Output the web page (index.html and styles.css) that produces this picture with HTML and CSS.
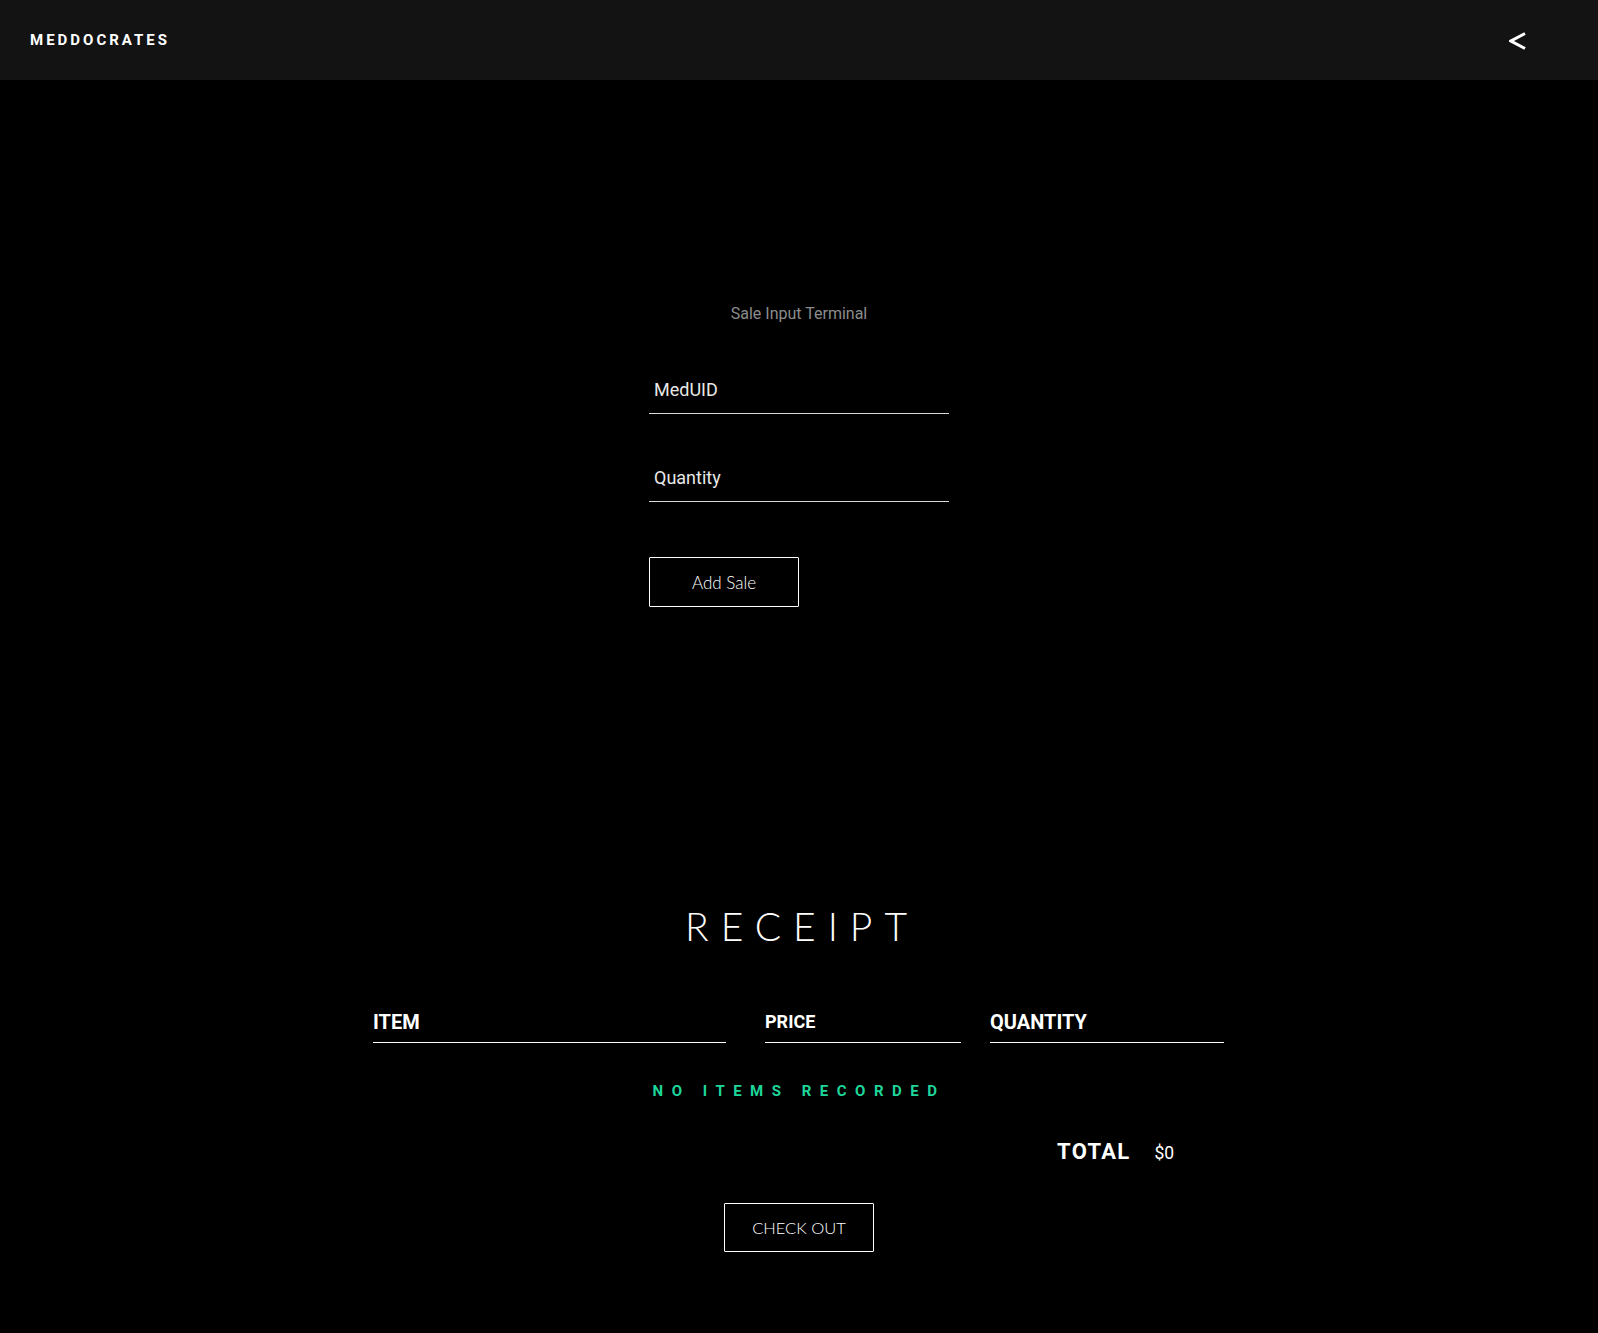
FILE: index.html
```html
<!DOCTYPE html>
<html lang="en">
<head>
<meta charset="utf-8">
<title>Meddocrates</title>
<link rel="stylesheet" href="styles.css">
</head>
<body>
<header class="topbar">
  <div class="brand">MEDDOCRATES</div>
  <button class="back" aria-label="Back">
    <svg width="17" height="18" viewBox="0 0 17 18"><polyline points="16,1.5 2,9 16,16.5" fill="none" stroke="#ffffff" stroke-width="3" stroke-linejoin="miter"/></svg>
  </button>
</header>
<main class="page">
  <section class="terminal">
    <p class="terminal-title">Sale Input Terminal</p>
    <input class="field" type="text" placeholder="MedUID">
    <input class="field field-qty" type="text" placeholder="Quantity">
    <button class="btn btn-add">Add Sale</button>
  </section>
  <section class="receipt">
    <h1 class="receipt-title">RECEIPT</h1>
    <div class="receipt-head">
      <div class="col col-item">ITEM</div>
      <div class="col col-price">PRICE</div>
      <div class="col col-qty">QUANTITY</div>
    </div>
    <p class="empty">NO ITEMS RECORDED</p>
    <div class="total"><span class="total-label">TOTAL</span><span class="total-value">$0</span></div>
    <button class="btn btn-checkout">CHECK OUT</button>
  </section>
</main>
</body>
</html>
```
FILE: styles.css
```css
html, body {
  margin: 0;
  padding: 0;
  background: #000000;
  color: #ffffff;
  font-family: Roboto, "Liberation Sans", sans-serif;
}
body {
  min-height: 1333px;
}
.topbar {
  height: 80px;
  background: #131313;
  display: flex;
  align-items: center;
  justify-content: space-between;
  padding: 0 72px 0 30px;
}
.brand {
  font-family: Roboto, sans-serif;
  font-weight: 700;
  font-size: 15px;
  letter-spacing: 3px;
  color: #ffffff;
}
.back {
  background: none;
  border: 0;
  padding: 0;
  width: 17px;
  height: 18px;
  margin-top: 2px;
  cursor: pointer;
  display: flex;
}
.page {
  display: flex;
  flex-direction: column;
}
.terminal {
  width: 300px;
  margin: 0 auto;
  display: flex;
  flex-direction: column;
  align-items: flex-start;
}
.terminal-title {
  margin: 224px 0 0;
  width: 100%;
  text-align: center;
  font-size: 16px;
  line-height: 20px;
  color: #8c8c8c;
}
.field {
  box-sizing: border-box;
  width: 300px;
  height: 40px;
  margin-top: 50px;
  padding: 0 5px 8px;
  background: transparent;
  border: 0;
  border-bottom: 1px solid #d9d9d9;
  outline: none;
  font-family: Roboto, sans-serif;
  font-size: 18px;
  color: #e8e8e8;
}
.field::placeholder {
  color: #e8e8e8;
  opacity: 1;
}
.field-qty {
  margin-top: 48px;
}
.btn {
  box-sizing: border-box;
  width: 150px;
  height: 50px;
  background: transparent;
  border: 1px solid #ffffff;
  border-radius: 1px;
  color: #ffffff;
  font-family: Lato, "Open Sans", sans-serif;
  font-weight: 300;
  font-size: 17px;
  cursor: pointer;
}
.btn-add {
  margin-top: 55px;
}
.receipt {
  display: flex;
  flex-direction: column;
  align-items: center;
}
.receipt-title {
  margin: 296px 0 0;
  font-family: Lato, sans-serif;
  font-weight: 300;
  font-size: 39px;
  line-height: 47px;
  letter-spacing: 12px;
  padding-left: 6px;
  color: #ffffff;
}
.receipt-head {
  width: 852px;
  margin-top: 60px;
  display: flex;
}
.col {
  line-height: 24px;
  padding-bottom: 8px;
  border-bottom: 1px solid #ffffff;
  font-weight: 700;
  font-size: 20px;
  display: flex;
  align-items: flex-end;
}
.col-item { width: 353px; }
.col-price { width: 196px; margin-left: 39px; font-size: 18px; }
.col-qty { width: 234px; margin-left: 29px; }
.empty {
  margin: 39px 0 0;
  font-weight: 700;
  font-size: 15px;
  line-height: 18px;
  letter-spacing: 8.5px;
  color: #1ed69a;
}
.total {
  box-sizing: border-box;
  width: 852px;
  margin-top: 39px;
  padding-left: 684px;
  display: flex;
  align-items: baseline;
  line-height: 26px;
}
.total-label {
  font-weight: 700;
  font-size: 22px;
  letter-spacing: 1.3px;
}
.total-value {
  margin-left: 24px;
  font-size: 17.5px;
}
.btn-checkout {
  margin-top: 37px;
  height: 49px;
  font-size: 16.5px;
}
```
